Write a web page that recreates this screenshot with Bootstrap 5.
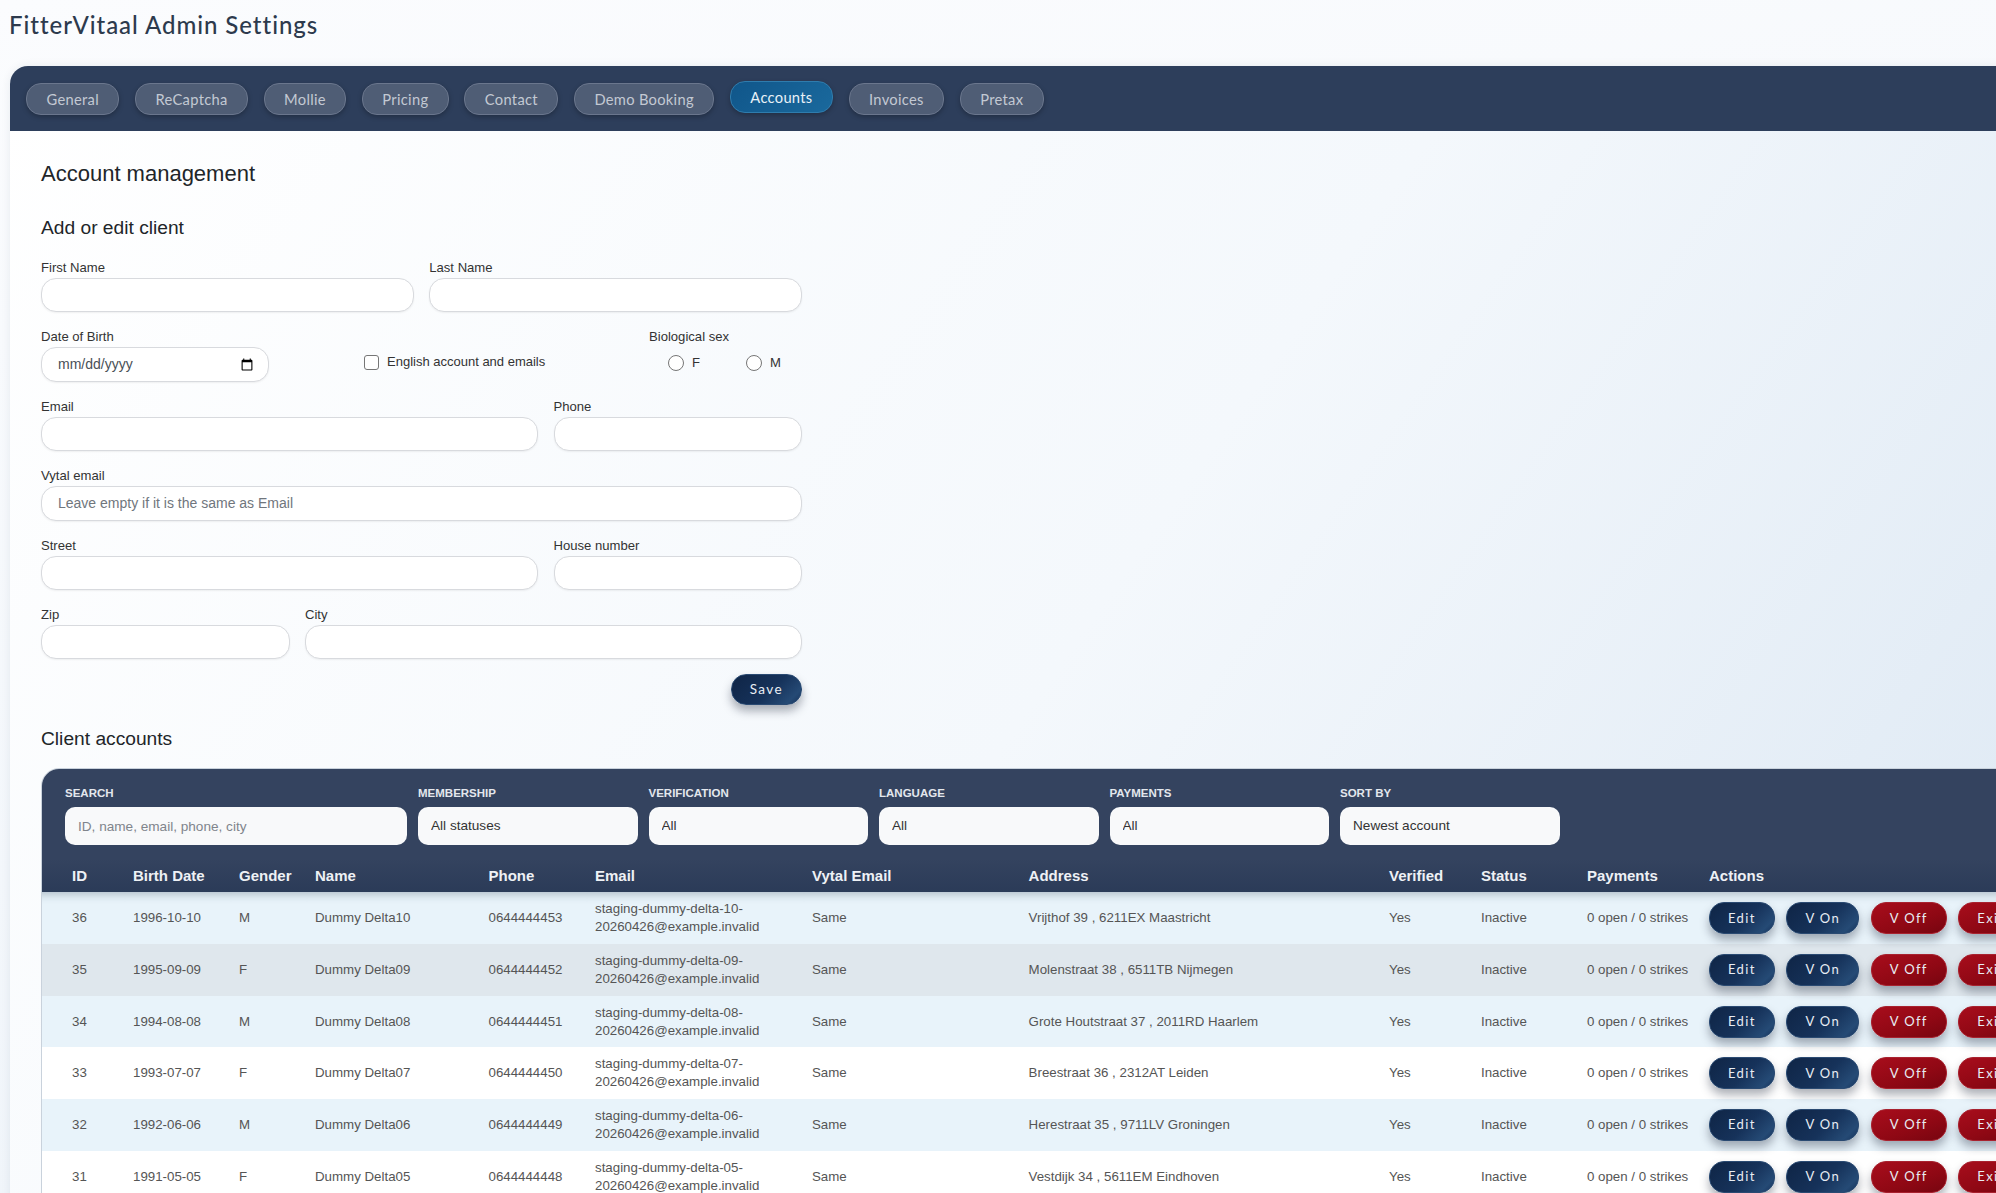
<!DOCTYPE html>
<html lang="en">
<head>
    <meta charset="UTF-8">
    <meta name="viewport" content="width=device-width, initial-scale=1.0">
    <title>FitterVitaal Admin Settings</title>
    <link href="https://cdn.jsdelivr.net/npm/bootstrap@5.3.3/dist/css/bootstrap.min.css" rel="stylesheet">
    <style>
        html, body { height: 100%; overflow: hidden; }
        body {
            font-family: "Liberation Sans", Arial, sans-serif;
            background: linear-gradient(170deg, #fbfcfe 0%, #edf3f9 100%);
            color: #212529;
        }
        .page-title {
            font-family: Lato, sans-serif;
            font-size: 24px;
            font-weight: 500;
            letter-spacing: .95px;
            color: #2d3a4d;
            line-height: 29px;
            padding: 10px 0 27px 9px;
            margin: 0;
        }
        .settings-shell {
            width: 2140px;
            margin-left: 10px;
            border-radius: 18px 0 0 0;
            background: linear-gradient(125deg, #ffffff 0%, #f4f8fc 50%, #e1ebf5 85%);
            box-shadow: 0 0 10px rgba(30, 50, 80, .08);
        }
        .tab-bar {
            height: 65px;
            padding: 17px 16px;
            gap: 15.5px;
            background: #2d3e5b;
            border-radius: 18px 0 0 0;
        }
        .tab-pill {
            height: 32px;
            padding: 0 19.5px;
            line-height: 30px;
            font-family: Lato, sans-serif;
            font-size: 14.7px;
            letter-spacing: .3px;
            color: #c3c9d3;
            background: #4f5d75;
            border: 1px solid #6a768d;
            border-radius: 15px;
            box-shadow: 0 2px 5px rgba(0, 0, 0, .25);
        }
        .tab-pill.tab-on {
            color: #e8f1f7;
            background: linear-gradient(135deg, #10568a, #1a699d);
            border-color: #2f7cad;
            margin-top: -2px;
        }
        .settings-body { padding: 30px 0 0 31px; }
        .title-main { font-size: 22px; line-height: 26px; font-weight: 400; margin: 0 0 29px; color: #212529; }
        .title-sub { font-size: 19.2px; line-height: 24px; font-weight: 400; margin: 0; color: #212529; }
        .client-form { width: 761px; margin-top: 18px; display: grid; row-gap: 15px; }
        .form-row { display: grid; column-gap: 15.5px; }
        .row-even { grid-template-columns: 1fr 1fr; }
        .row-wide { grid-template-columns: 2fr 1fr; }
        .row-narrow { grid-template-columns: 1fr 2fr; }
        .row-mixed { grid-template-columns: 228px 95px 285px 153px; column-gap: 0; }
        .field-label { display: block; font-size: 13.1px; line-height: 20px; color: #333; margin: 0; }
        .field-input, .field-input:focus {
            height: 34.4px;
            padding: 0 16px;
            font-size: 14px;
            color: #495057;
            background: #fff;
            border: 1px solid #d8dade;
            border-radius: 15px;
            box-shadow: 0 1px 2px rgba(0, 0, 0, .06);
        }
        .field-input[type="date"] { padding-right: 12px; }
        .field-input::placeholder { color: #70767d; }
        .check-slot { grid-column: 3; padding-top: 25px; }
        .check-slot .form-check-input { width: 15px; height: 15px; margin: 0 8px 0 0; border-radius: 3px; border: 1px solid #767676; }
        .check-slot label { font-size: 13px; color: #333; }
        .sex-slot { grid-column: 4; }
        .radio-pair { padding: 6px 0 0 19px; gap: 46px; }
        .radio-pair .form-check-input { width: 16px; height: 16px; margin: 0 8px 0 0; border: 1px solid #767676; }
        .radio-pair label { font-size: 13.1px; color: #333; }
        .save-line { margin-top: 14.5px; width: 761px; }
        .pill-btn {
            height: 31px;
            padding: 0 18px;
            font-family: Lato, sans-serif;
            font-size: 13.5px;
            line-height: 29px;
            letter-spacing: 1.4px;
            color: #e8edf3;
            border: 1px solid #2a4a72;
            border-radius: 15px;
            background: linear-gradient(135deg, #0f2546 0%, #16325a 55%, #254a75 85%, #16325a 100%);
            box-shadow: 0 6px 10px rgba(20, 30, 50, .35);
        }
        .pill-btn:hover { color: #fff; }
        .pill-danger {
            border-color: #a8222f;
            background: linear-gradient(160deg, #a80d1c 0%, #8f0814 60%, #770510 100%);
        }
        .title-accounts { margin-top: 22px; }
        .accounts-panel {
            margin-top: 17.5px;
            border: 1px solid #c9d2dc;
            border-radius: 18px 0 0 0;
            overflow: hidden;
        }
        .filter-bar {
            display: grid;
            grid-template-columns: 342px 219.5px 219.5px 219.5px 219.5px 220px;
            column-gap: 11px;
            padding: 16px 0 14px 23px;
            background: #34435f;
        }
        .filter-bar label {
            display: block;
            font-size: 11.5px;
            font-weight: 700;
            line-height: 17px;
            text-transform: uppercase;
            color: #e3e7ed;
            margin: 0 0 5px;
        }
        .filter-input, .filter-input:focus {
            height: 38px;
            padding: 0 13px;
            font-size: 13.6px;
            color: #333;
            background: #f8f9fa;
            border: 0;
            border-radius: 10px;
            background-image: none;
        }
        .filter-input::placeholder { color: #80858c; }
        .accounts-table { table-layout: fixed; width: 2098px; font-size: 13.3px; }
        .accounts-table th {
            height: 33px;
            padding: 1px 8px 0;
            font-size: 15px;
            font-weight: 700;
            color: #eef1f5;
            background: linear-gradient(180deg, #34435f 0%, #2b3b58 100%);
            border: 0;
            vertical-align: middle;
        }
        .accounts-table td {
            height: 51.7px;
            padding: 0 8px;
            line-height: 18px;
            color: #555;
            border: 0;
            vertical-align: middle;
            --bs-table-bg: #fff;
        }
        .accounts-table th:first-child, .accounts-table td:first-child { padding-left: 30px; }
        .accounts-table tr.row-tint td { --bs-table-bg: #e8f3fa; }
        .accounts-table tr.row-grey td { --bs-table-bg: #dfe7ed; }
        .accounts-table tbody tr:first-child td { box-shadow: inset 0 12px 10px -10px rgba(30, 45, 70, .3); }
        .action-group { gap: 11.5px; }
        .action-group .pill-btn { height: 32px; padding: 0 18px; font-size: 13px; flex: none; }
    </style>
</head>
<body>
    <h1 class="page-title">FitterVitaal Admin Settings</h1>

    <div class="settings-shell">
        <div class="tab-bar d-flex align-items-start">
            <a class="tab-pill text-decoration-none" href="#">General</a>
            <a class="tab-pill text-decoration-none" href="#">ReCaptcha</a>
            <a class="tab-pill text-decoration-none" href="#">Mollie</a>
            <a class="tab-pill text-decoration-none" href="#">Pricing</a>
            <a class="tab-pill text-decoration-none" href="#">Contact</a>
            <a class="tab-pill text-decoration-none" href="#">Demo Booking</a>
            <a class="tab-pill tab-on text-decoration-none" href="#">Accounts</a>
            <a class="tab-pill text-decoration-none" href="#">Invoices</a>
            <a class="tab-pill text-decoration-none" href="#">Pretax</a>
        </div>

        <div class="settings-body">
            <h2 class="title-main">Account management</h2>
            <h3 class="title-sub">Add or edit client</h3>

            <form class="client-form" onsubmit="return false;">
                <div class="form-row row-even">
                    <div><label class="field-label">First Name</label><input type="text" class="form-control field-input"></div>
                    <div><label class="field-label">Last Name</label><input type="text" class="form-control field-input"></div>
                </div>
                <div class="form-row row-mixed">
                    <div><label class="field-label">Date of Birth</label><input type="date" class="form-control field-input"></div>
                    <div class="check-slot d-flex align-items-center align-self-start">
                        <input type="checkbox" class="form-check-input" id="englishAccount">
                        <label for="englishAccount">English account and emails</label>
                    </div>
                    <div class="sex-slot">
                        <span class="field-label">Biological sex</span>
                        <div class="radio-pair d-flex">
                            <div class="d-flex align-items-center"><input type="radio" class="form-check-input" name="sex" id="sexF"><label for="sexF">F</label></div>
                            <div class="d-flex align-items-center"><input type="radio" class="form-check-input" name="sex" id="sexM"><label for="sexM">M</label></div>
                        </div>
                    </div>
                </div>
                <div class="form-row row-wide">
                    <div><label class="field-label">Email</label><input type="email" class="form-control field-input"></div>
                    <div><label class="field-label">Phone</label><input type="text" class="form-control field-input"></div>
                </div>
                <div>
                    <label class="field-label">Vytal email</label>
                    <input type="email" class="form-control field-input" placeholder="Leave empty if it is the same as Email">
                </div>
                <div class="form-row row-wide">
                    <div><label class="field-label">Street</label><input type="text" class="form-control field-input"></div>
                    <div><label class="field-label">House number</label><input type="text" class="form-control field-input"></div>
                </div>
                <div class="form-row row-narrow">
                    <div><label class="field-label">Zip</label><input type="text" class="form-control field-input"></div>
                    <div><label class="field-label">City</label><input type="text" class="form-control field-input"></div>
                </div>
            </form>

            <div class="save-line d-flex justify-content-end">
                <button type="button" class="btn pill-btn">Save</button>
            </div>

            <h3 class="title-sub title-accounts">Client accounts</h3>

            <div class="accounts-panel">
                <div class="filter-bar">
                    <div><label>Search</label><input type="text" class="form-control filter-input" placeholder="ID, name, email, phone, city"></div>
                    <div><label>Membership</label><select class="form-select filter-input"><option>All statuses</option></select></div>
                    <div><label>Verification</label><select class="form-select filter-input"><option>All</option></select></div>
                    <div><label>Language</label><select class="form-select filter-input"><option>All</option></select></div>
                    <div><label>Payments</label><select class="form-select filter-input"><option>All</option></select></div>
                    <div><label>Sort by</label><select class="form-select filter-input"><option>Newest account</option></select></div>
                </div>
                <table class="table accounts-table mb-0">
                    <colgroup>
                        <col style="width:83px"><col style="width:106px"><col style="width:76px"><col style="width:173.5px">
                        <col style="width:106.5px"><col style="width:217px"><col style="width:216.6px"><col style="width:360.4px">
                        <col style="width:92px"><col style="width:106px"><col style="width:122px"><col>
                    </colgroup>
                    <thead>
                        <tr><th>ID</th><th>Birth Date</th><th>Gender</th><th>Name</th><th>Phone</th><th>Email</th><th>Vytal Email</th><th>Address</th><th>Verified</th><th>Status</th><th>Payments</th><th>Actions</th></tr>
                    </thead>
                    <tbody id="accountRows"></tbody>
                </table>
            </div>
        </div>
    </div>

    <script>
        // Rows of the client table
        const CLIENTS = [
            [36, '1996-10-10', 'M', '10', '0644444453', 'Vrijthof 39 , 6211EX Maastricht', 'row-tint'],
            [35, '1995-09-09', 'F', '09', '0644444452', 'Molenstraat 38 , 6511TB Nijmegen', 'row-grey'],
            [34, '1994-08-08', 'M', '08', '0644444451', 'Grote Houtstraat 37 , 2011RD Haarlem', 'row-tint'],
            [33, '1993-07-07', 'F', '07', '0644444450', 'Breestraat 36 , 2312AT Leiden', ''],
            [32, '1992-06-06', 'M', '06', '0644444449', 'Herestraat 35 , 9711LV Groningen', 'row-tint'],
            [31, '1991-05-05', 'F', '05', '0644444448', 'Vestdijk 34 , 5611EM Eindhoven', '']
        ];
        document.getElementById('accountRows').innerHTML = CLIENTS.map(c => `
            <tr class="${c[6]}">
                <td>${c[0]}</td><td>${c[1]}</td><td>${c[2]}</td><td>Dummy Delta${c[3]}</td><td>${c[4]}</td>
                <td>staging-dummy-delta-${c[3]}-20260426@example.invalid</td><td>Same</td><td>${c[5]}</td>
                <td>Yes</td><td>Inactive</td><td>0 open / 0 strikes</td>
                <td><div class="action-group d-flex">
                    <button type="button" class="btn pill-btn">Edit</button>
                    <button type="button" class="btn pill-btn">V On</button>
                    <button type="button" class="btn pill-btn pill-danger">V Off</button>
                    <button type="button" class="btn pill-btn pill-danger">Exit</button>
                </div></td>
            </tr>`).join('');
    </script>
    <script src="https://cdn.jsdelivr.net/npm/bootstrap@5.3.3/dist/js/bootstrap.bundle.min.js"></script>
</body>
</html>
